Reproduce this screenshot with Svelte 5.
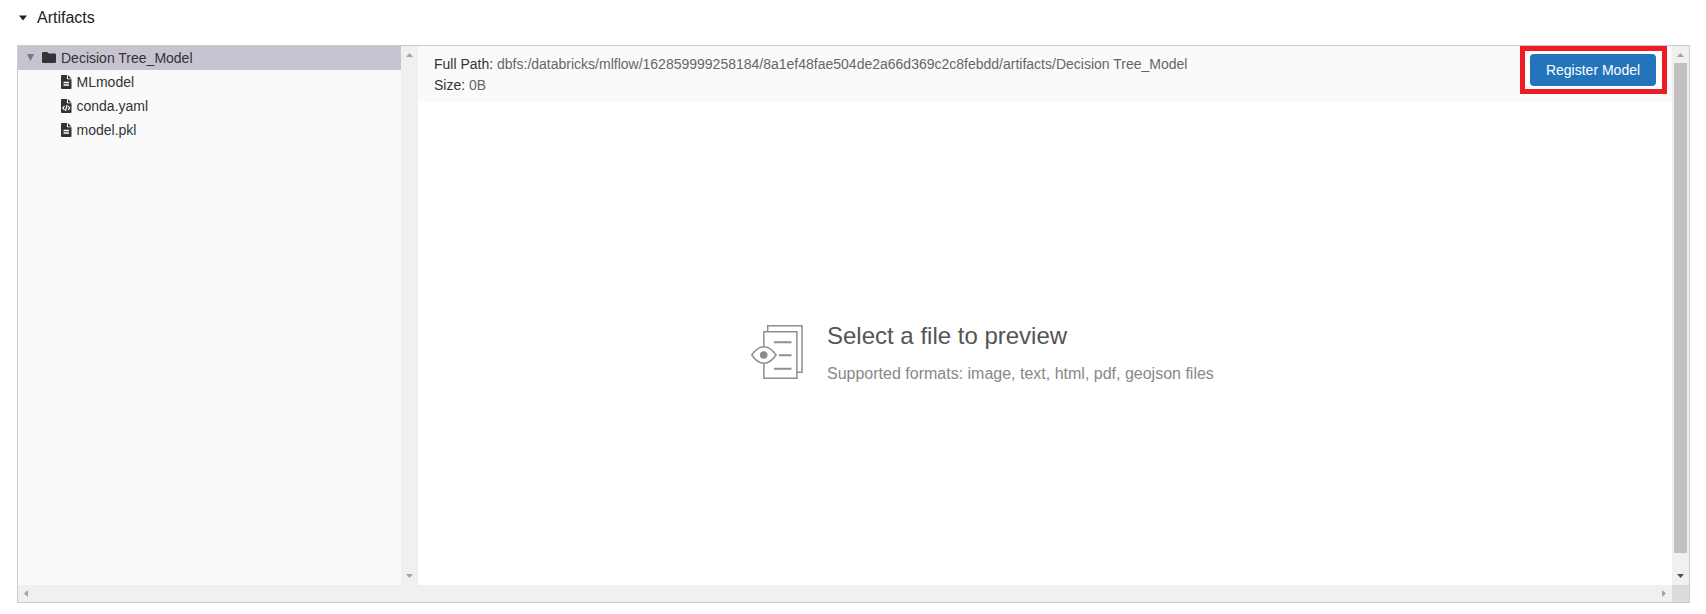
<script>
  let open = $state(true);
  const files = [
    { name: 'MLmodel', kind: 'text' },
    { name: 'conda.yaml', kind: 'code' },
    { name: 'model.pkl', kind: 'text' }
  ];
  const path = 'dbfs:/databricks/mlflow/162859999258184/8a1ef48fae504de2a66d369c2c8febdd/artifacts/Decision Tree_Model';
</script>

<section class="page">
  <button class="heading" onclick={() => (open = !open)}>
    <svg width="10" height="6" viewBox="0 0 10 6"><path d="M1 .5h8L5 5.500z" fill="#222" /></svg>
    <span>Artifacts</span>
  </button>

  {#if open}
    <div class="viewer">
      <div class="body">
        <aside class="tree">
          <div class="row folder">
            <svg class="toggle" width="7" height="7" viewBox="0 0 7 7"><path d="M0 0h7L3.500 7z" fill="#777" /></svg>
            <svg class="foldericon" width="14" height="11" viewBox="0 0 14 11"><path d="M1.200 0h4l1.500 1.500h6q1.300 0 1.300 1.300v6.900q0 1.300-1.300 1.300H1.300Q0 11 0 9.700V1.300Q0 0 1.200 0z" fill="#333" /></svg>
            <span>Decision Tree_Model</span>
          </div>
          {#each files as file}
            <div class="row file">
              <svg width="11" height="14" viewBox="0 0 11 14">
                <path d="M.8 0H6v4.200h4.500v9q0 .8-.8.8H.8q-.8 0-.8-.8V.8Q0 0 .8 0zM7 0l3.500 3.400H7z" fill="#333" />
                {#if file.kind === 'text'}
                  <path d="M2.500 7.500H8M2.500 10H8" stroke="#fafafa" stroke-width="1.300" />
                {:else}
                  <path d="M3.500 6.800L1.800 8.900l1.700 2.100M7 6.800l1.700 2.100L7 11M6 6L4.500 12" fill="none" stroke="#fafafa" stroke-width="1.200" />
                {/if}
              </svg>
              <span>{file.name}</span>
            </div>
          {/each}
        </aside>

        <div class="vbar">
          <svg width="7" height="4" viewBox="0 0 7 4"><path d="M0 4L3.500 0L7 4z" fill="#a3a3a3" /></svg>
          <svg width="7" height="4" viewBox="0 0 7 4"><path d="M0 0h7L3.500 4z" fill="#a3a3a3" /></svg>
        </div>

        <main>
          <header>
            <div class="info">
              <div><b>Full Path:</b> <span>{path}</span></div>
              <div><b>Size:</b> <span>0B</span></div>
            </div>
            <div class="callout"><button class="register">Register Model</button></div>
          </header>
          <div class="preview">
            <svg width="53" height="56" viewBox="0 0 53 56" fill="none" stroke="#8f8f8f">
              <path d="M16.700 6V.7H51V47.300H46" stroke-width="1.500" />
              <path d="M12.900 21.500V6.700h33V53.300h-33V38.500" stroke-width="1.500" />
              <path d="M23 17.300h17.500M28 30.300h12.500M23 43.700h17.500" stroke-width="2" />
              <path d="M.8 30C4.500 24.500 8.500 21.700 12.900 21.700S21.300 24.500 25 30C21.300 35.500 17.300 38.300 12.900 38.300S4.500 35.500.8 30z" stroke-width="1.500" />
              <circle cx="12.700" cy="30" r="3.800" fill="#8c8c8c" stroke="none" />
            </svg>
            <div class="message">
              <h2>Select a file to preview</h2>
              <p>Supported formats: image, text, html, pdf, geojson files</p>
            </div>
          </div>
        </main>

        <div class="vbar">
          <svg width="7" height="4" viewBox="0 0 7 4"><path d="M0 4L3.500 0L7 4z" fill="#a3a3a3" /></svg>
          <div class="thumb"></div>
          <svg width="7" height="4" viewBox="0 0 7 4"><path d="M0 0h7L3.500 4z" fill="#505050" /></svg>
        </div>
      </div>
      <div class="hbar">
        <div class="track">
          <svg width="4" height="7" viewBox="0 0 4 7"><path d="M4 0v7L0 3.500z" fill="#a3a3a3" /></svg>
          <svg width="4" height="7" viewBox="0 0 4 7"><path d="M0 0v7l4-3.500z" fill="#a3a3a3" /></svg>
        </div>
        <div class="corner"></div>
      </div>
    </div>
  {/if}
</section>

<style>
  :global(body) { background: #fff; }
  .page {
    box-sizing: border-box;
    height: 614px;
    padding: 0 16px 0 17px;
    font: 14px/21px "Liberation Sans", Arial, sans-serif;
    color: #333;
  }
  svg { display: block; flex: none; }
  button { border: 0; font: inherit; cursor: pointer; }
  .heading {
    display: flex;
    align-items: center;
    gap: 9px;
    height: 45px;
    padding: 0 0 10px 1px;
    background: none;
    color: #222;
    font-size: 16px;
  }
  .viewer {
    box-sizing: border-box;
    display: flex;
    flex-direction: column;
    height: 558px;
    border: 1px solid #ccc;
  }
  .body { display: flex; height: 539px; }
  .tree { width: 383px; background: #fafafa; }
  .row { display: flex; align-items: center; height: 24px; }
  .folder { background: #c7c3d1; padding-left: 9px; }
  .toggle { margin: 0 8px 1px 0; }
  .foldericon { margin: 0 5px 1px 0; }
  .file { padding-left: 43px; gap: 4.500px; }
  .vbar {
    box-sizing: border-box;
    display: flex;
    flex-direction: column;
    align-items: center;
    justify-content: space-between;
    width: 17px;
    padding: 7px 0;
    background: #f0f0f0;
  }
  .thumb { width: 13px; height: 490px; margin: 6px 0 auto; background: #c1c1c1; }
  main { display: flex; flex-direction: column; width: 1254px; }
  header {
    display: flex;
    justify-content: space-between;
    align-items: flex-start;
    height: 56px;
    background: #fafafa;
  }
  .info { padding: 8px 0 0 16px; color: #666; white-space: nowrap; }
  b { font-weight: 400; color: #333; }
  .callout {
    box-sizing: border-box;
    width: 147px;
    height: 48px;
    margin-right: 5px;
    padding: 3px 5px;
    border: 5px solid #ed1c24;
    background: #fff;
  }
  .register {
    display: block;
    width: 126px;
    height: 32px;
    padding: 0;
    border-radius: 4px;
    background: #2374bb;
    color: #fff;
  }
  .preview { display: flex; align-items: flex-start; padding: 223px 0 0 333px; gap: 23px; }
  .message { margin-top: -3px; }
  h2 { margin: 0; font-size: 24px; line-height: 28px; font-weight: 400; color: #555; }
  p { margin: 14px 0 0; font-size: 16px; line-height: 20px; color: #888; }
  .hbar { display: flex; height: 17px; }
  .track {
    flex: 1;
    display: flex;
    align-items: center;
    justify-content: space-between;
    padding: 0 6px;
    background: #f0f0f0;
  }
  .corner { width: 17px; background: #dcdcdc; }
</style>
